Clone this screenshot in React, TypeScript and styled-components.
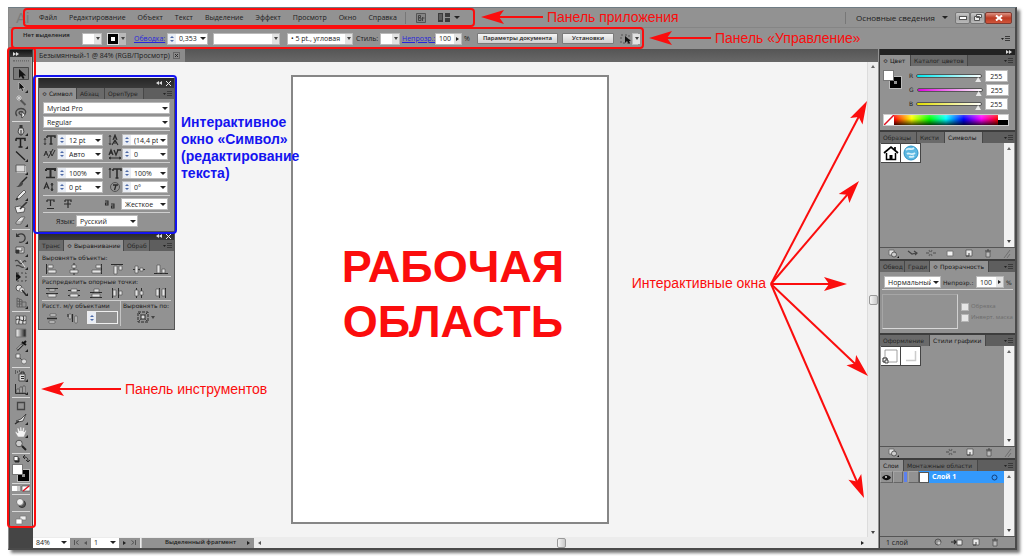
import React, { ReactNode } from 'react';
import styled, { createGlobalStyle, css } from 'styled-components';

const UI = '"Open Sans", "Noto Sans", sans-serif';
const WIDE = '"DejaVu Sans", "Noto Sans", sans-serif';
const RED = '#fb0d0d';
const BLUE = '#1414f0';

const Global = createGlobalStyle`
  *, *::before, *::after { box-sizing: border-box; }
  body { margin: 0; background: #fff; font-family: ${UI}; font-size: 7px; line-height: 9px; color: #1c1c1c; }
  button, input, select { font: inherit; color: inherit; margin: 0; padding: 0; border: 0; border-radius: 0; background: none; appearance: none; min-width: 0; }
  svg { display: block; flex: none; }
`;

/* ---------- frame ---------- */
const Page = styled.div`
  position: relative; min-height: 100vh; padding: 7px 7px 6px 8px; display: flex; overflow: hidden;
`;
const Win = styled.div`
  flex: 1; min-width: 0; display: flex; flex-direction: column; background: #929292;
  border-top: 1px solid #6f7c84; border-right: 2px solid #4a4a4a; border-bottom: 2px solid #4a4a4a; border-left: 1px solid #8a8a8a;
  box-shadow: 3px 3px 3px rgba(0,0,0,.55);
`;
const Spacer = styled.div`flex: 1;`;

const MenuBar = styled.header`
  height: 20px; display: flex; align-items: center; padding: 0 3px 0 7px; border-bottom: 1px solid #858585;
`;
const Logo = styled.span`
  width: 20px; font: 15px/18px "Liberation Sans", sans-serif; color: #7b7b7b;
`;
const Menu = styled.nav`display: flex; gap: 12px; padding: 0 8px 0 3px;`;
const MenuItem = styled.button<{ $large?: boolean }>`font-size: ${p => (p.$large ? 8 : 7)}px; line-height: 12px; white-space: nowrap;`;
const VLine = styled.span`width: 1px; height: 12px; background: #777; margin-right: 10px;`;
const WinButtons = styled.div`display: flex; margin-left: 7px;`;
const WinButton = styled.button<{ $close?: boolean }>`
  width: ${p => (p.$close ? 27 : 15)}px; height: 12px; display: grid; place-items: center; border: 1px solid ${p => (p.$close ? '#7e3a30' : '#777')};
  border-radius: 2px; background: ${p => (p.$close ? 'linear-gradient(#dd9384, #bb3a22 50%, #d1553a)' : 'linear-gradient(#c9c9c9, #a4a4a4 50%, #b9b9b9)')};
`;

const ControlBar = styled.div`
  height: 21px; display: flex; align-items: center; padding: 0 5px 0 14px; white-space: nowrap;
`;
const Status = styled.span`width: 59px; height: 16px; font-weight: 600; font-size: 6px; line-height: 8px;`;
const BlueLink = styled.a`color: #2626dc; text-decoration: underline; font-size: 7px;`;
const Label = styled.label<{ $w?: number; $m?: string }>`
  ${p => p.$w && css`width: ${p.$w}px; flex: none;`} margin: ${p => p.$m || 0}; white-space: nowrap;
`;
const Field = styled.span<{ $w: number; $m?: string }>`
  display: flex; flex: none; align-items: stretch; width: ${p => p.$w}px; height: 12px; margin: ${p => p.$m || 0}; background: #fff; border: 1px solid #b9b9b9; font: 7px/9px ${UI};
`;
const FieldInput = styled.input`flex: 1; padding: 0 0 0 3px; width: 0;`;
const FieldSelect = styled.select`flex: 1; padding: 0 0 0 3px; width: 0; outline: 0;`;
const DropZone = styled.span<{ $grey?: boolean }>`
  width: ${p => (p.$grey ? 7 : 9)}px; flex: none; display: grid; place-items: center; background: ${p => (p.$grey ? '#e2e2e2' : '#fff')};
`;
const Down = styled.span`width: 0; height: 0; border: 3px solid transparent; border-bottom: 0; border-top-color: #222;`;
const SmallDown = styled.span`width: 0; height: 0; border: 2px solid transparent; border-bottom: 0; border-top: 3px solid #444;`;
const SideArrow = styled.span`width: 0; height: 0; border: 2px solid transparent; border-right: 0; border-left: 3px solid #222;`;
const BackArrow = styled.span`width: 0; height: 0; border: 2px solid transparent; border-left: 0; border-right: 3px solid #555;`;
const Spin = styled.span`
  width: 8px; flex: none; display: flex; flex-direction: column; align-items: center; justify-content: center; gap: 2px; background: #e9edf4;
  &::before { content: ''; border: 2px solid transparent; border-top: 0; border-bottom-color: #4e6ba8; }
  &::after { content: ''; border: 2px solid transparent; border-bottom: 0; border-top-color: #4e6ba8; }
`;
const StrokeSwatch = styled.button`
  width: 12px; height: 12px; background: #fff; border: 4px solid #000; outline: 1px solid #ddd; outline-offset: -1px;
`;
const SwatchArrow = styled.button`width: 7px; height: 12px; display: grid; place-items: center; background: #b9b9b9;`;
const PushButton = styled.button<{ $w: number }>`
  width: ${p => p.$w}px; height: 11px; margin-right: 4px; font-size: 6px; font-weight: 600; line-height: 9px; border: 1px solid #7a7a7a; border-radius: 1px; background: linear-gradient(#f4f4f4, #d0d0d0);
`;

const Body = styled.div`flex: 1; display: flex; min-height: 0;`;

/* ---------- tools ---------- */
const ToolColumn = styled.aside`width: 24px; flex: none; background: #454545; padding: 1px 1px 0 1px;`;
const ToolHead = styled.div`
  height: 7px; padding-left: 3px; background: linear-gradient(#151515, #3c3c3c); display: flex; align-items: center;
`;
const ToolBody = styled.div`
  background: #929292; display: flex; flex-direction: column; align-items: center; padding: 3px 0 2px; border-right: 1px solid #a9a9a9;
`;
const Grip = styled.div`width: 16px; height: 2px; border-top: 1px dotted #6c6c6c; border-bottom: 1px dotted #7c7c7c; margin-bottom: 5px;`;
const ToolButton = styled.button<{ $on?: boolean }>`
  width: 16px; height: 13px; display: grid; place-items: center; border-radius: 1px;
  ${p => p.$on && css`background: #7b7b7b; box-shadow: inset 0 0 0 1px #484848;`}
`;
const ToolLine = styled.div`width: 18px; height: 1px; margin: 2px 0 1px; background: #d8d8d8;`;

/* ---------- document ---------- */
const Center = styled.main`flex: 1; min-width: 0; display: flex; flex-direction: column;`;
const DocTabs = styled.div`height: 13px; display: flex; background: linear-gradient(#555, #686868);`;
const DocTab = styled.div`
  display: flex; align-items: center; gap: 3px; padding: 0 5px 0 6px; background: #8b8b8b; line-height: 12px; white-space: nowrap;
`;
const CloseTab = styled.button`width: 7px; height: 7px; display: grid; place-items: center; border: 1px solid #666;`;
const Work = styled.div`flex: 1; display: flex; position: relative; background: #f4f4f4;`;
const Canvas = styled.div`flex: 1; display: flex; justify-content: center; padding: 13px 0;`;
const Artboard = styled.section`
  width: 318px; background: #fff; border: 2px solid #868686; display: flex; flex-direction: column; align-items: center; padding: 162px 0 0 6px;
`;
const Headline = styled.h1`
  margin: 0; font: bold 45px/55px "Liberation Sans", sans-serif; color: ${RED}; text-align: center; width: 240px;
`;
const VScroll = styled.div`
  width: 11px; flex: none; background: #ececec; border-left: 1px solid #dcdcdc; display: flex; flex-direction: column; align-items: center; justify-content: space-between; padding: 3px 0;
`;
const Thumb = styled.span`width: 9px; height: 10px; border: 1px solid #999; border-radius: 2px; background: linear-gradient(90deg, #f5f5f5, #c8c8c8);`;
const UpMark = styled.span`border: 2px solid transparent; border-top: 0; border-bottom: 3px solid #666;`;
const StatusBar = styled.footer`height: 11px; display: flex; align-items: center; background: #ececec;`;
const StatusNav = styled.div`
  height: 10px; width: 21px; background: #929292; display: flex; align-items: center; justify-content: space-evenly;
`;
const StatusField = styled.div<{ $w: number }>`
  width: ${p => p.$w}px; height: 10px; background: #fff; display: flex; align-items: center; padding: 0 3px; justify-content: space-between;
`;
const StatusText = styled.div`
  flex: none; width: 113px; height: 10px; margin-left: 1px; padding: 0 4px 0 23px; background: #929292; border-left: 1px solid #ccc; display: flex; align-items: center; justify-content: space-between;
  font-size: 6px; font-weight: 600;
`;
const HTrack = styled.div`flex: 1; display: flex; align-items: center; justify-content: space-between; padding: 0 14px 0 4px;`;

/* ---------- panels ---------- */
const Floating = styled.section<{ $y: number }>`
  position: absolute; left: 5px; top: ${p => p.$y}px; width: 137px; background: #929292; border: 1px solid #555; border-top: 0;
`;
const FloatHead = styled.div<{ $h: number }>`
  height: ${p => p.$h}px; background: linear-gradient(#262626, #3a3a3a); display: flex; align-items: center; justify-content: flex-end; gap: 4px; padding-right: 3px;
`;
const Tabs = styled.div`height: 11px; display: flex; align-items: stretch; background: #5e5e5e;`;
const Tab = styled.button<{ $w: number; $on?: boolean }>`
  width: ${p => p.$w}px; flex: none; overflow: hidden; white-space: nowrap; text-align: left; padding-left: 3px; font: 6px/10px ${WIDE};
  border-right: 1px solid #474747; background: ${p => (p.$on ? '#929292' : '#6a6a6a')}; color: ${p => (p.$on ? '#161616' : '#262626')};
`;
const PanelMenu = styled.button`margin-left: auto; padding-right: 2px; display: grid; place-items: center;`;
const CharBody = styled.div`padding: 3px 4px 4px; display: flex; flex-direction: column; gap: 2px;`;
const Row = styled.div<{ $gap?: number; $pad?: string }>`
  display: flex; align-items: center; gap: ${p => p.$gap || 0}px; padding: ${p => p.$pad || 0};
`;
const PairRow = styled.div<{ $top?: number }>`
  display: flex; justify-content: space-between; padding: ${p => p.$top || 0}px 2px 0 0;
`;
const Rule = styled.div<{ $m?: number }>`height: 1px; flex: none; margin: ${p => p.$m || 0}px 0 0; background: #cfcfcf;`;
const AlignBody = styled.div`padding: 2px 3px 3px; font: 6px/9px ${WIDE};`;
const AlignIcons = styled.div`display: flex; gap: 8px; padding: 0 3px; height: 13px; align-items: center;`;
const IconButton = styled.button`width: 14px; height: 12px; display: grid; place-items: center;`;
const Split = styled.div`display: flex; height: 25px;`;
const Column = styled.div<{ $line?: boolean }>`
  display: flex; flex-direction: column; gap: 1px; white-space: nowrap; ${p => p.$line && css`border-left: 1px solid #c4c4c4; padding-left: 2px; width: 51px;`}
`;
const GapBox = styled.span`display: flex; width: 31px; height: 13px; border: 1px solid #eee; background: #929292;`;

const Dock = styled.aside`
  width: 136px; flex: none; display: flex; flex-direction: column; gap: 2px; background: #3d3d3d; padding: 0 0 0 1px; margin-left: 1px;
`;
const DockHead = styled.div`height: 6px; display: flex; align-items: center; justify-content: flex-end; padding-right: 3px; background: #222;`;
const Panel = styled.section<{ $grow?: boolean }>`background: #929292; display: flex; flex-direction: column; ${p => p.$grow && css`flex: 1;`}`;
const ColorBody = styled.div`padding: 4px 6px 4px 3px;`;
const ColorTop = styled.div`display: flex; gap: 8px; height: 42px;`;
const FillStroke = styled.div<{ $s: number }>`
  width: ${p => p.$s}px; height: ${p => p.$s}px; display: grid;
  &::before { content: ''; grid-area: 1/1; place-self: end; width: 62%; height: 62%; background: #929292; border: 4px solid #000; outline: 1px solid #bbb; }
  &::after { content: ''; grid-area: 1/1; place-self: start; width: 62%; height: 62%; background: #fff; border: 1px solid #777; z-index: 1; }
`;
const Sliders = styled.div`flex: 1; display: flex; flex-direction: column; gap: 2px;`;
const SliderRow = styled.label`display: flex; align-items: center; height: 12px; gap: 3px; font: 6px/8px ${WIDE};`;
const Range = styled.input<{ $c: string }>`
  width: 66px; height: 12px;
  &::-webkit-slider-runnable-track { height: 4px; border: 1px solid #555; border-radius: 2px; background: linear-gradient(90deg, ${p => p.$c}, #fff); }
  &::-webkit-slider-thumb { appearance: none; width: 6px; height: 5px; margin-top: 2px; background: #e8e8e8; clip-path: polygon(50% 0, 100% 100%, 0 100%); }
`;
const NumBox = styled.input`width: 23px; height: 12px; background: #fff; border: 1px solid #bbb; padding-left: 4px; font: 7px/9px ${UI};`;
const Spectrum = styled.div`display: flex; height: 12px; margin-top: 2px; border: 1px solid #ccc;`;
const Hues = styled.div`flex: 1; background: linear-gradient(rgba(255,255,255,.25), transparent 40%, rgba(0,0,0,.75)), linear-gradient(90deg, red, #ff0 17%, #0f0 34%, #0ff 50%, #00f 67%, #f0f 84%, red);`;
const BlackWhite = styled.div`width: 10px; background: linear-gradient(#fff 50%, #000 50%);`;
const ListArea = styled.div<{ $h?: number }>`
  ${p => (p.$h ? css`height: ${p.$h}px;` : css`flex: 1;`)} display: flex; border-bottom: 1px solid #555;
`;
const Cells = styled.div`flex: 1; display: flex; align-items: flex-start; padding-left: 1px;`;
const Cell = styled.button`width: 20px; height: 20px; background: #fff; display: grid; place-items: center; border: 1px solid #444; border-left: 0;`;
const MiniScroll = styled.div`
  width: 10px; margin-right: 1px; background: #f2f2f2; display: flex; flex-direction: column; justify-content: space-between; align-items: center; padding: 4px 0;
`;
const Foot = styled.div`height: 11px; display: flex; align-items: center; gap: 5px; padding: 0 0 0 6px;`;
const TransBody = styled.div`padding: 4px 2px 4px 2px; font: 6px/9px ${WIDE};`;
const MaskRow = styled.div`display: flex; gap: 3px; padding-top: 4px; white-space: nowrap;`;
const Preview = styled.div`width: 76px; height: 35px; flex: none; border: 1px solid #a6a6a6; border-right-color: #d0d0d0; border-bottom-color: #d8d8d8;`;
const Checks = styled.div`display: flex; flex-direction: column; gap: 2px; padding-top: 8px; color: #6c6c6c; font-family: ${UI};`;
const CheckLabel = styled.label`display: flex; align-items: center; gap: 2px; height: 9px;`;
const Check = styled.input`width: 8px; height: 8px; background: #e6e6e6; border: 1px solid #b5b5b5; flex: none;`;
const LayerRow = styled.div`flex: 1; display: flex; height: 12px; align-items: stretch;`;
const LayerCell = styled.div<{ $w: number; $c?: string }>`
  width: ${p => p.$w}px; background: ${p => p.$c || '#929292'}; border: 1px solid #a5a5a5; border-right-color: #666; border-bottom-color: #666; display: grid; place-items: center;
`;
const LayerMark = styled.div`width: 3px; margin: 1px; background: #5b80ee;`;
const LayerName = styled.div`
  flex: 1; background: #3399fc; color: #fff; font: bold 7px/10px ${UI}; display: flex; align-items: center; gap: 3px; padding: 0 6px 0 0;
`;
const LayerThumb = styled.span`width: 10px; height: 11px; background: #fff; border: 1px solid #555;`;

/* ---------- annotations ---------- */
const Outline = styled.div<{ $x: number; $y: number; $w: number; $h: number; $c?: string }>`
  position: absolute; pointer-events: none; left: ${p => p.$x}px; top: ${p => p.$y}px; width: ${p => p.$w}px; height: ${p => p.$h}px; border: 2px solid ${p => p.$c || RED}; border-radius: 4px;
`;
const Callout = styled.div<{ $x: number; $y: number }>`
  position: absolute; left: ${p => p.$x}px; top: ${p => p.$y}px; display: flex; align-items: center; gap: 4px; font: 14px/16px "Liberation Sans", sans-serif; color: ${RED}; white-space: nowrap;
`;
const FanNote = styled(Callout)`left: auto; right: 154px; align-items: flex-start; pointer-events: none;`;
const FanText = styled.span`padding-top: 177px;`;
const BlueNote = styled.p`
  position: absolute; left: 181px; top: 114px; margin: 0; width: 130px; font: bold 14px/17px "Liberation Sans", sans-serif; color: ${BLUE};
`;

/* ---------- small drawings ---------- */
const Svg = ({ w = 14, h = 12, children }: { w?: number; h?: number; children: ReactNode }) => (
  <svg width={w} height={h} viewBox={`0 0 ${w} ${h}`} fill="none" stroke="#2b2b2b" aria-hidden="true">{children}</svg>
);
const Corner = () => <path d="M14 9v3h-3z" fill="#222" stroke="none" />;

const tools: Record<string, ReactNode> = {
  select: <path d="M5 1v9l2-2 2 3 1.500-1L9 7.500h3z" fill="#111" stroke="none" />,
  direct: <><path d="M5 1v8l2-1.500 1 3 1.500-.5-1-3h2.500z" fill="#111" stroke="#ddd" strokeWidth=".5" /><Corner /></>,
  wand: <><path d="M6.500 6l5 5" stroke="#555" strokeWidth="2" /><path d="M5 1v6M2 4h6M3 2l4 4M7 2L3 6" stroke="#d5d5d5" strokeWidth=".8" /></>,
  lasso: <><path d="M3 9C0 5 3 1.500 7 1.500s6 3 4 5.500-5 1-6-1c0-2 4-2 4 0l-1 5" stroke="#444" strokeWidth="1.300" /><path d="M8 5v6l3-3z" fill="#eee" strokeWidth=".5" /></>,
  pen: <><path d="M5 4l-1 4 2 3h2l2-3-1-4z" fill="#d4d4d4" stroke="#444" /><path d="M5.500 1h3v3h-3z" fill="#333" stroke="none" /><path d="M7 6v5" /><Corner /></>,
  type: <><path d="M2 1.500h9v2.500M2 4V1.500M6.500 1.500V10M4.500 10h4" stroke="#1f1f1f" strokeWidth="1.500" /><Corner /></>,
  line: <><path d="M2 1.500l9 8.500" stroke="#1f1f1f" strokeWidth="1.300" /><Corner /></>,
  rect: <><path d="M2 2h9v7H2z" fill="#dcdcdc" stroke="#5c5c5c" /><path d="M2.500 9.500h9V3" stroke="#fff" strokeWidth=".5" /><Corner /></>,
  brush: <><path d="M13 1L7 7" stroke="#222" strokeWidth="1.500" /><path d="M8 6c-3 0-2 4-6 5 3 .5 7-1 7-4z" fill="#444" stroke="none" /></>,
  pencil: <><path d="M10 1l2 2-6 6-4 2 2-4z" fill="#e8e8e8" stroke="#444" strokeWidth=".8" /><path d="M2 11l2-1-1-1z" fill="#111" /><Corner /></>,
  blob: <><path d="M1 5l5-1 5 2-1 4-7 1z" fill="#eee" stroke="#444" strokeWidth=".8" /><path d="M13 0L6 7" strokeWidth="1.600" stroke="#333" /></>,
  eraser: <><path d="M2 7l5-5h4L7 9H2z" fill="#e6e6e6" stroke="#555" strokeWidth=".8" /><path d="M2 7h5l4-5M7 7v2" stroke="#777" strokeWidth=".8" /><Corner /></>,
  rotate: <><path d="M3 4C5 1 10 1 11 5s-3 6-6 5" stroke="#3a3a3a" strokeWidth="1.200" /><path d="M2 1v4h4z" fill="#333" stroke="none" /><Corner /></>,
  scale: <><path d="M2 2h8v6H2z" fill="#ddd" stroke="#444" strokeWidth=".8" /><path d="M2 5h3v3H2z" fill="#333" stroke="#333" strokeWidth=".8" /><path d="M8 3v3H5" stroke="#555" /><Corner /></>,
  warp: <><path d="M1 3c4-3 4 5 7 2s3-3 4-1M2 8c3-3 5 3 8 1" stroke="#444" strokeWidth="1.200" /><path d="M6 2l5 7" stroke="#ddd" /><Corner /></>,
  free: <><path d="M2 1v9l5-4z" fill="#111" stroke="none" /><path d="M3 2h9v8H3z" stroke="#444" strokeDasharray="2 2" /></>,
  shape: <><circle cx="5" cy="4" r="3" fill="#e5e5e5" stroke="#555" /><circle cx="8" cy="6" r="2.500" fill="#ddd" stroke="#777" /><path d="M8 6l4 5" strokeWidth="1.500" /><Corner /></>,
  perspective: <><path d="M3 1l5 2v7H3zM3 4l5 1M3 7h5M5.500 2v8M8 5h4v5H8" stroke="#555" strokeWidth=".8" /><Corner /></>,
  mesh: <><path d="M2 2h10v8H2z" fill="#ddd" stroke="#555" strokeWidth=".8" /><path d="M2 6c3-3 6 3 10 0M5 2c2 3-1 5 0 8M9 2c2 3-1 5 0 8" stroke="#333" /></>,
  gradient: <><defs><linearGradient id="tg"><stop stopColor="#fff" /><stop offset="1" stopColor="#111" /></linearGradient></defs><path d="M2 2h10v8H2z" fill="url(#tg)" stroke="#777" /></>,
  dropper: <><path d="M9 4l-6 6" stroke="#333" strokeWidth="2.500" /><path d="M8 4.500l-5 5" stroke="#fff" /><path d="M8 2l4 3M10 3l2-2" stroke="#111" strokeWidth="2" /><Corner /></>,
  blend: <><path d="M2 1h4v4H2z" fill="#eee" stroke="#555" strokeWidth=".8" /><path d="M6 5l2 2" strokeDasharray="1 1" /><circle cx="10" cy="8.500" r="2.500" fill="#ddd" stroke="#666" strokeWidth=".8" /></>,
  spray: <><path d="M5 4h6v7H5z" fill="#d8d8d8" stroke="#444" /><path d="M7 4V2h3v2M7 6.500h3M7 8.500h3" /><path d="M1 1h1M3 2h1M1 3h1M5 1h1" stroke="#222" /><Corner /></>,
  graph: <><path d="M1.500 1v9.500H12" /><path d="M3 6h2v4H3zM6 4h2v6H6zM9 3h2v7H9z" fill="#ccc" stroke="#444" strokeWidth=".7" /><Corner /></>,
  artboard: <path d="M3.500 2.500h7v7h-7z" stroke="#444" strokeWidth="1.300" />,
  slice: <><path d="M12 1L7 6 2 8l2 1 5-1z" fill="#e0e0e0" stroke="#333" strokeWidth=".8" /><path d="M1 11l4-3" strokeWidth="1.300" /><Corner /></>,
  hand: <><path d="M4 11L1 6l1-.5L4 7 3 2h1.500L6 5V1h1.500L8 5l1-3.500h1.500L10 6l1.500-2 1 .5L10 11z" fill="#f4f4f4" stroke="#888" strokeWidth=".5" /><Corner /></>,
  zoom: <><circle cx="5" cy="4.500" r="3.300" fill="#ccc" stroke="#555" /><path d="M8 7l4 4" stroke="#222" strokeWidth="2" /></>,
};
const toolGroups = [
  ['select', 'direct', 'wand', 'lasso'],
  ['pen', 'type', 'line', 'rect', 'brush', 'pencil', 'blob', 'eraser'],
  ['rotate', 'scale', 'warp', 'free', 'shape', 'perspective'],
  ['mesh', 'gradient', 'dropper', 'blend'],
  ['spray', 'graph'],
  ['artboard', 'slice', 'hand', 'zoom'],
];

const Collapse = ({ left }: { left?: boolean }) => (
  <svg width="6" height="4" viewBox="0 0 6 4" fill="#ddd" aria-hidden="true">
    <path d={left ? 'M3 0v4L0 2zM6 0v4L3 2z' : 'M0 0v4l3-2zM3 0v4l3-2z'} />
  </svg>
);
const CloseMark = () => <Svg w={5} h={5}><path d="M0 0l5 5M5 0L0 5" stroke="#eee" /></Svg>;
const MenuLines = () => (
  <Svg w={9} h={6}><path d="M0 2h3L1.500 4z" fill="#222" stroke="none" /><path d="M4 .5h5M4 2.500h5M4 4.500h5" stroke="#3a3a3a" /></Svg>
);

type TabSpec = [string, number];
const TabStrip = ({ tabs, on }: { tabs: TabSpec[]; on: number }) => (
  <Tabs role="tablist">
    {tabs.map(([t, w], i) => <Tab key={t} role="tab" aria-selected={i === on} $w={w} $on={i === on}>{t}</Tab>)}
    <PanelMenu aria-label="Меню панели"><MenuLines /></PanelMenu>
  </Tabs>
);

const Combo = ({ v, w, spin, label, m, grey }: { v: string; w: number; spin?: boolean; label: string; m?: string; grey?: boolean }) => (
  <Field $w={w} $m={m}>
    {spin && <Spin />}
    {spin ? <FieldInput aria-label={label} defaultValue={v} /> : <FieldSelect aria-label={label}><option>{v}</option></FieldSelect>}
    <DropZone $grey={grey}>{grey ? <SmallDown /> : <Down />}</DropZone>
  </Field>
);

const glyphs: Record<string, ReactNode> = {
  size: <><path d="M4 2h8v2M4 4V2M8 2v8M6.500 10h3" strokeWidth="1.500" /><path d="M2 5v5M1 6l1-2 1 2M1 9l1 2 1-2" strokeWidth=".7" /></>,
  leading: <><path d="M5 6l2-5 2 5M6 4h2M4 11l3-5 3 5M5 9h4" strokeWidth="1.100" /><path d="M2 2v8M1 3l1-2 1 2M1 9l1 2 1-2" strokeWidth=".7" /></>,
  kern: <path d="M1 8l2-5 2 5M2 6h2M7 3l2 5 3-6M5 10l5-9" />,
  track: <><path d="M1 7l2-5 2 5M2 5h2M6 2l2 5 2-5M9 2h4" strokeWidth="1.300" /><path d="M1 10h12M3 9l-2 1 2 1M11 9l2 1-2 1" /></>,
  vscale: <><path d="M3 2h9v2M3 4V2M7.500 2v8" strokeWidth="2" /><path d="M3 10.500h9" strokeWidth="1.500" /></>,
  hscale: <><path d="M5 2h8v2M5 4V2M9 2v9M7.500 11h3" strokeWidth="1.600" /><path d="M2 2v9M1 3l1-2 1 2" /></>,
  base: <><path d="M1 8l2.500-6L6 8M2 6h3" strokeWidth="1.200" /><path d="M8 4l1-2 1 2zM8 8l1 2 1-2zM9 4v5" /></>,
  turn: <><circle cx="7" cy="6" r="4.500" stroke="#555" /><path d="M5 4h5M8 4L6.500 9" strokeWidth="1.300" /></>,
  under: <path d="M4 2h7v2M4 4V2M7.500 2v6M4 10.500h7" strokeWidth="1.200" />,
  strike: <path d="M5 2h6v2M5 4V2M8 2v8M4 6h7" strokeWidth="1.200" />,
  aa: <path d="M1 3h3v4H1.500V5H4M7 6h3v4H7.500V8H10" strokeWidth="1.100" />,
};
const Glyph = ({ n }: { n: string }) => <Svg>{glyphs[n]}</Svg>;

const Measure = ({ n, v, label }: { n: string; v: string; label: string }) => (
  <Row><Glyph n={n} /><Combo spin v={v} w={46} label={label} /></Row>
);

const CharacterPanel = () => (
  <Floating $y={16}>
    <FloatHead $h={10}><Collapse left /><CloseMark /></FloatHead>
    <TabStrip tabs={[['≎ Символ', 38], ['Абзац', 28], ['OpenType', 39]]} on={0} />
    <CharBody>
      <Combo v="Myriad Pro" w={127} label="Шрифт" />
      <Combo v="Regular" w={127} label="Начертание" />
      <Rule />
      <PairRow $top={1}><Measure n="size" v="12 pt" label="Кегль" /><Measure n="leading" v="(14,4 pt" label="Интерлиньяж" /></PairRow>
      <PairRow><Measure n="kern" v="Авто" label="Кернинг" /><Measure n="track" v="0" label="Трекинг" /></PairRow>
      <Rule />
      <PairRow $top={2}><Measure n="vscale" v="100%" label="Масштаб по горизонтали" /><Measure n="hscale" v="100%" label="Масштаб по вертикали" /></PairRow>
      <PairRow><Measure n="base" v="0 pt" label="Сдвиг базовой линии" /><Measure n="turn" v="0°" label="Поворот символа" /></PairRow>
      <Rule />
      <Row $gap={3} $pad="0 2px 0 0"><Glyph n="under" /><Glyph n="strike" /><Spacer /><Glyph n="aa" /><Combo v="Жесткое" w={47} label="Сглаживание" /></Row>
      <Rule />
      <Row $pad="0 0 0 13px"><Label $w={20}>Язык:</Label><Combo v="Русский" w={62} label="Язык" /></Row>
    </CharBody>
  </Floating>
);

const L = '#e4e4e4';
const Bars = ({ d }: { d: string }) => <path d={d} fill={L} stroke="#555" strokeWidth=".7" />;
const alignIcons: Record<string, ReactNode> = {
  l: <><path d="M1.500 1v10" /><Bars d="M3 2h5v3H3zM3 7h8v3H3z" /></>,
  c: <><path d="M7 0v12" /><Bars d="M5 2h4v3H5zM3 7h8v3H3z" /></>,
  r: <><path d="M12.500 1v10" /><Bars d="M7 2h5v3H7zM3 7h9v3H3z" /></>,
  t: <><path d="M1 1.500h12" /><Bars d="M4 3h3v8H4zM9 3h3v4H9z" /></>,
  m: <><path d="M1 6.500h12" /><Bars d="M3 3h3v7H3zM8 5h3v3H8z" /></>,
  b: <><path d="M0 10.500h14" /><Bars d="M3 2h3v8H3zM8 6h3v4H8z" /></>,
  v1: <><path d="M1 1.500h12M1 6.500h12" /><Bars d="M4 2h6v2H4zM3 7h8v3H3z" /></>,
  v2: <><path d="M1 3.500h12M1 8.500h12" /><Bars d="M4 2h6v3H4zM3 7h8v3H3z" /></>,
  v3: <><path d="M1 5.500h12M1 10.500h12" /><Bars d="M5 2h5v3H5zM3 7h8v3H3z" /></>,
  h1: <><path d="M2.500 1v10M8.500 1v10" /><Bars d="M3 3h3v6H3zM9 4h3v4H9z" /></>,
  h2: <><path d="M4.500 1v10M9.500 1v10" /><Bars d="M3 3h3v6H3zM8 4h3v4H8z" /></>,
  h3: <><path d="M5.500 1v10M11.500 1v10" /><Bars d="M2 2h3v7H2zM8 2h3v7H8z" /></>,
  dv: <><path d="M2 6.500h10" strokeWidth="1.500" /><Bars d="M5 2h6v2H5zM4 9h6v2H4z" /></>,
  dh: <><path d="M2 2v3M6.500 2v8" strokeWidth="1.200" /><Bars d="M3 2h2v5H3zM9 4h2v7H9z" /></>,
};
const AlignButton = ({ n }: { n: string }) => <IconButton aria-label={n}><Svg>{alignIcons[n]}</Svg></IconButton>;
const AlignButtons = ({ names }: { names: string[] }) => (
  <AlignIcons>{names.map(n => <AlignButton key={n} n={n} />)}</AlignIcons>
);

const AlignPanel = () => (
  <Floating $y={170}>
    <FloatHead $h={8}><Collapse left /><CloseMark /></FloatHead>
    <TabStrip tabs={[['Транс', 25], ['≎ Выравнивание', 60], ['Обраб', 26]]} on={1} />
    <AlignBody>
      Выровнять объекты:
      <AlignButtons names={['l', 'c', 'r', 't', 'm', 'b']} />
      <Rule $m={1} />
      Распределить опорные точки:
      <AlignButtons names={['v1', 'v2', 'v3', 'h1', 'h2', 'h3']} />
      <Rule $m={1} />
      <Split>
        <Column>
          Расст. м/у объектами
          <Row $pad="0 0 0 3px" $gap={7}>
            <AlignButton n="dv" />
            <AlignButton n="dh" />
            <GapBox><Spin /><FieldInput aria-label="Интервал" /></GapBox>
          </Row>
        </Column>
        <Spacer />
        <Column $line>
          Выровнять по:
          <Row $pad="0 0 0 14px" $gap={2}>
            <Svg w={12} h={12}><path d="M1 1h10v10H1z" strokeDasharray="3 1" /><path d="M2 2l8 8M10 2l-8 8" strokeDasharray="2 1" /><path d="M4 4h4v4H4z" fill="#ddd" /></Svg>
            <SmallDown />
          </Row>
        </Column>
      </Split>
    </AlignBody>
  </Floating>
);

const footIcons: Record<string, ReactNode> = {
  lib: <><path d="M2 2h5v5H2z" fill="#e4e4e4" stroke="#666" strokeWidth=".8" /><circle cx="7" cy="6.500" r="2.500" fill="#ccc" stroke="#444" strokeWidth=".8" /><path d="M12 8v2h-2z" fill="#111" stroke="none" /></>,
  place: <path d="M2 3l4 3 4-1M8 3l3 2-2 2" strokeWidth="1.200" stroke="#444" />,
  break: <path d="M1 5h3M8 5h3M4 2l1 2M7 2l-1 2M4 8l1-2M7 8l-1-2" stroke="#666" strokeWidth="1.300" />,
  opts: <path d="M3 3h6v5H3z" fill="#f2f2f2" stroke="#777" />,
  add: <><path d="M3 2h6v6H3z" fill="#e8e8e8" stroke="#555" strokeWidth=".8" /><path d="M6 5v3H3" stroke="#444" /></>,
  trash: <><path d="M3 3h6M5 2h2" stroke="#444" /><path d="M4 4h4v5H4z" fill="#bbb" stroke="#555" strokeWidth=".8" /></>,
  grip: <path d="M3 10l6-8M6 10l3-4" stroke="#666" strokeWidth=".8" />,
  mask: <><circle cx="6" cy="5" r="3" stroke="#555" /><circle cx="7" cy="6" r="1.500" fill="#ccc" stroke="none" /></>,
  sub: <><path d="M0 5h5M3 3l2 2-2 2" strokeWidth="1.200" /><path d="M6 3h5v5H6z" fill="#e8e8e8" stroke="#444" strokeWidth=".8" /></>,
};
const FootIcon = ({ n }: { n: string }) => <IconButton aria-label={n}><Svg w={12} h={11}>{footIcons[n]}</Svg></IconButton>;
const Mini = () => <MiniScroll><UpMark /><SmallDown /></MiniScroll>;

const RightDock = () => (
  <Dock>
    <div>
      <DockHead><Collapse /></DockHead>
      <Panel>
        <TabStrip tabs={[['≎ Цвет', 31], ['Каталог цветов', 57]]} on={0} />
        <ColorBody>
          <ColorTop>
            <FillStroke $s={18} />
            <Sliders>
              {[['R', '#00e8f0'], ['G', '#e000e0'], ['B', '#e0dc00']].map(([n, c]) => (
                <SliderRow key={n}>{n}<Range type="range" max={255} defaultValue={255} $c={c} aria-label={n} /><NumBox defaultValue="255" aria-label={`${n} значение`} /></SliderRow>
              ))}
            </Sliders>
          </ColorTop>
          <Spectrum>
            <Svg w={10} h={10}><path d="M0 0h10v10H0z" fill="#fff" stroke="none" /><path d="M0 10L10 0" stroke="#e01020" strokeWidth="1.500" /></Svg>
            <Hues /><BlackWhite />
          </Spectrum>
        </ColorBody>
      </Panel>
    </div>
    <Panel>
      <TabStrip tabs={[['Образцы', 37], ['Кисти', 28], ['Символы', 38]]} on={2} />
      <ListArea $h={105}>
        <Cells>
          <Cell aria-label="Дом"><Svg w={18} h={18}><path d="M2 9l7-6 7 6M13 3v3" stroke="#000" strokeWidth="1.700" /><path d="M4.500 9v6.500h9V9" stroke="#000" strokeWidth="1.500" /><path d="M7.500 11h3v5h-3z" fill="#000" stroke="none" /></Svg></Cell>
          <Cell aria-label="Сфера"><Svg w={18} h={18}><circle cx="9" cy="9" r="7" fill="#5cb8e2" stroke="#2f94c6" /><path d="M4 6c3-3 5 1 8-2M5 10c2-2 4 2 8-1M7 13c2-1 3 1 5-1" stroke="#d5f0fa" strokeWidth="1.800" /></Svg></Cell>
        </Cells>
        <Mini />
      </ListArea>
      <Foot>{['lib', 'place', 'break', 'opts', 'add', 'trash', 'grip'].map(n => <FootIcon key={n} n={n} />)}</Foot>
    </Panel>
    <Panel>
      <TabStrip tabs={[['Обвод', 25], ['Гради', 25], ['≎ Прозрачность', 59]]} on={2} />
      <TransBody>
        <Row>
          <Combo v="Нормальный" w={57} label="Режим" m="0 2px" />
          <Label htmlFor="opacity" $w={33}>Непрозр.:</Label>
          <Field $w={28}><FieldInput id="opacity" defaultValue="100" /><DropZone $grey><SideArrow /></DropZone></Field>&nbsp;%
        </Row>
        <Rule $m={1} />
        <MaskRow>
          <Preview />
          <Checks>
            <CheckLabel><Check type="checkbox" disabled />Обрезка</CheckLabel>
            <CheckLabel><Check type="checkbox" disabled />Инверт. маска</CheckLabel>
          </Checks>
        </MaskRow>
      </TransBody>
    </Panel>
    <Panel>
      <TabStrip tabs={[['Оформление', 50], ['Стили графики', 56]]} on={1} />
      <ListArea $h={101}>
        <Cells>
          <Cell aria-label="Стиль по умолчанию"><Svg w={18} h={18}><path d="M3 3h12v12H3z" stroke="#888" strokeWidth=".8" /><path d="M1 11h4v4H1z" fill="#fff" stroke="#222" /><path d="M3 13h3v3H3z" fill="#eee" stroke="#222" strokeWidth=".8" /></Svg></Cell>
          <Cell aria-label="Тень"><Svg w={18} h={18}><path d="M4 13.500h9.500V4" stroke="#ccc" strokeWidth="1.500" /></Svg></Cell>
        </Cells>
        <Mini />
      </ListArea>
      <Foot><FootIcon n="lib" /><Spacer />{['break', 'add', 'trash', 'grip'].map(n => <FootIcon key={n} n={n} />)}</Foot>
    </Panel>
    <Panel $grow>
      <TabStrip tabs={[['Слои', 24], ['Монтажные области', 74]]} on={0} />
      <ListArea>
        <LayerRow>
          <LayerCell $w={13}><Svg w={9} h={7}><path d="M0 3.500C2 0 7 0 9 3.500 7 7 2 7 0 3.500z" fill="#111" stroke="none" /><circle cx="4" cy="3" r="1" fill="#ddd" stroke="none" /></Svg></LayerCell>
          <LayerCell $w={10} />
          <LayerMark />
          <LayerCell $w={11} />
          <LayerName><LayerThumb />Слой 1<Spacer /><Svg w={7} h={7}><circle cx="3.500" cy="3.500" r="2.500" stroke="#16407a" /></Svg></LayerName>
        </LayerRow>
        <Mini />
      </ListArea>
      <Foot>1 слой<Spacer />{['mask', 'sub', 'add', 'trash'].map(n => <FootIcon key={n} n={n} />)}<FootEnd /></Foot>
    </Panel>
  </Dock>
);
const FootEnd = styled.span`width: 8px;`;

const head = (x: number, y: number, deg: number) => (
  <path d="M0 0L-23 -7L-18 0L-23 7Z" fill={RED} transform={`translate(${x} ${y}) rotate(${deg})`} />
);
const LeftArrow = ({ w }: { w: number }) => (
  <svg width={w} height="16" viewBox={`0 0 ${w} 16`} aria-hidden="true">
    <path d={`M16 8H${w}`} stroke={RED} strokeWidth="2" />{head(0, 8, 180)}
  </svg>
);
const fanTips = [[97, 3], [89, 83], [77, 186], [98, 278], [94, 400]];
const FanArrows = () => (
  <svg width="100" height="404" viewBox="0 0 100 404" aria-hidden="true">
    {fanTips.map(([x, y]) => {
      const a = Math.atan2(y - 186, x - 1);
      return (
        <g key={y}>
          <path d={`M1 186L${x - 15 * Math.cos(a)} ${y - 15 * Math.sin(a)}`} stroke={RED} strokeWidth="2" />
          {head(x, y, (a * 180) / Math.PI)}
        </g>
      );
    })}
  </svg>
);

const menu = ['Файл', 'Редактирование', 'Объект', 'Текст', 'Выделение', 'Эффект', 'Просмотр', 'Окно', 'Справка'];

export default function App() {
  return (
    <Page>
      <Global />
      <Win>
        <MenuBar>
          <Logo>Ai</Logo>
          <Menu>{menu.map(m => <MenuItem key={m}>{m}</MenuItem>)}</Menu>
          <VLine />
          <Row $gap={12}>
            <Svg w={10} h={10}><path d="M.5.5h9v9h-9z" stroke="#555" fill="#858585" /><path d="M2.500 2.500v5M2.500 2.500h2v2h-2M2.500 5h2.500v2.500H2.500M6.500 4v4M6.500 5h2" stroke="#444" /></Svg>
            <Row $gap={4}><Svg w={12} h={9}><path d="M0 0h5v9H0zM7 0h5v4H7zM7 5h5v4H7z" fill="#3c3c3c" stroke="none" /><path d="M1 2h3M1 4h3M1 6h3" stroke="#aaa" strokeWidth=".6" /></Svg><Down /></Row>
          </Row>
          <Spacer />
          <VLine />
          <Row $gap={7}><MenuItem $large>Основные сведения</MenuItem><Down /></Row>
          <WinButtons>
            <WinButton aria-label="Свернуть"><Svg w={8} h={5}><rect x=".5" y="1.500" width="7" height="3" fill="#fff" stroke="#555" /></Svg></WinButton>
            <WinButton aria-label="Восстановить"><Svg w={8} h={7}><path d="M2.500.5h5v3h-5zM.5 2.500h5v4h-5z" fill="#eee" stroke="#555" /></Svg></WinButton>
            <WinButton $close aria-label="Закрыть"><Svg w={8} h={6}><path d="M1 .5l6 5M7 .5l-6 5" stroke="#fff" strokeWidth="2" /></Svg></WinButton>
          </WinButtons>
        </MenuBar>
        <ControlBar>
          <Status>Нет выделения</Status>
          <Combo v="" w={20} grey label="Заливка" m="0 5px 0 0" />
          <StrokeSwatch aria-label="Цвет обводки" /><SwatchArrow aria-label="Выбрать обводку"><SmallDown /></SwatchArrow>
          <Label $w={33} $m="0 0 0 8px"><BlueLink href="#stroke">Обводка:</BlueLink></Label>
          <Combo spin v="0,353" w={41} label="Толщина" m="0 5px 0 0" />
          <Combo v="" w={67} grey label="Профиль" m="0 7px 0 0" />
          <Combo v="•  5 pt., угловая" w={66} grey label="Кисть" m="0 3px 0 0" />
          <Label $w={24}>Стиль:</Label>
          <Combo v="" w={20} grey label="Стиль" m="0 2px 0 0" />
          <Label $w={33}><BlueLink href="#opacity">Непрозр.:</BlueLink></Label>
          <Field $w={27}><FieldInput aria-label="Непрозрачность" defaultValue="100" /><DropZone $grey><SideArrow /></DropZone></Field>
          <Label $w={13} $m="0 0 0 2px">%</Label>
          <PushButton $w={81}>Параметры документа</PushButton>
          <PushButton $w={52}>Установки</PushButton>
          <Svg w={14} h={12}><path d="M3 2h8v8H3z" stroke="#555" strokeDasharray="2 2" /><path d="M7 3v7l2-2 2 3 1-1-1-2h2z" fill="#111" stroke="none" /></Svg>
          <Field $w={6}><DropZone $grey><SmallDown /></DropZone></Field>
          <Spacer />
          <MenuLines />
        </ControlBar>
        <Body>
          <ToolColumn>
            <ToolHead><Collapse /></ToolHead>
            <ToolBody>
              <Grip />
              {toolGroups.map((g, gi) => (
                <React.Fragment key={gi}>
                  {g.map(t => <ToolButton key={t} $on={t === 'select'} aria-label={t}><Svg>{tools[t]}</Svg></ToolButton>)}
                  <ToolLine />
                </React.Fragment>
              ))}
              <Svg w={18} h={9}><path d="M3 3h4v4H3z" fill="#222" /><path d="M2 1.500h4v4H2z" fill="#fff" stroke="#555" /><path d="M12 2c3 0 4 1 4 5M13 0l-2 2 2 2M14 5l2 2 2-2" /></Svg>
              <FillStroke $s={17} />
              <ToolLine />
              <Svg w={18} h={7}><path d="M0 1h5v5H0z" fill="#fff" stroke="none" /><path d="M5 1h3v5H5z" fill="#ccc" stroke="none" /><path d="M10 1h8v5h-8z" fill="#fff" stroke="#444" strokeWidth=".6" /><path d="M11 6l6-5" stroke="#e01020" strokeWidth="1.500" /></Svg>
              <ToolLine />
              <ToolButton aria-label="draw"><Svg><circle cx="8" cy="7" r="3.500" fill="#555" stroke="#333" /><circle cx="6" cy="5" r="3.500" fill="#eee" stroke="#777" /></Svg></ToolButton>
              <ToolLine />
              <ToolButton aria-label="screen"><Svg><path d="M6 2h6v4H6z" fill="#f0f0f0" stroke="#777" strokeWidth=".7" /><path d="M2 5h6v5H2z" fill="#fff" stroke="#777" strokeWidth=".7" /></Svg></ToolButton>
            </ToolBody>
          </ToolColumn>
          <Center>
            <DocTabs>
              <DocTab>Безымянный-1 @ 84% (RGB/Просмотр)<CloseTab aria-label="Закрыть вкладку"><Svg w={5} h={5}><path d="M1 1l3 3M4 1L1 4" /></Svg></CloseTab></DocTab>
            </DocTabs>
            <Work>
              <Canvas><Artboard><Headline>РАБОЧАЯ ОБЛАСТЬ</Headline></Artboard></Canvas>
              <VScroll><UpMark /><Thumb /><SmallDown /></VScroll>
              <CharacterPanel />
              <AlignPanel />
            </Work>
            <StatusBar>
              <StatusField $w={37}>84%<Down /></StatusField>
              <StatusNav><Svg w={5} h={5}><path d="M.5 0v5M4.500.5l-2.500 2 2.500 2" stroke="#555" /></Svg><BackArrow /></StatusNav>
              <StatusField $w={28}>1<Down /></StatusField>
              <StatusNav><SideArrow /><Svg w={5} h={5}><path d="M4.500 0v5M.5.5l2.500 2-2.500 2" stroke="#555" /></Svg></StatusNav>
              <StatusText>Выделенный фрагмент<SideArrow /></StatusText>
              <HTrack><BackArrow /><Thumb /><SideArrow /></HTrack>
            </StatusBar>
          </Center>
          <RightDock />
        </Body>
      </Win>

      <Outline $x={23} $y={8} $w={452} $h={19} />
      <Outline $x={11} $y={27} $w={633} $h={22} />
      <Outline $x={7} $y={47} $w={29} $h={481} />
      <Outline $x={33} $y={75} $w={144} $h={159} $c={BLUE} />
      <Callout $x={481} $y={9}><LeftArrow w={62} />Панель приложения</Callout>
      <Callout $x={649} $y={30}><LeftArrow w={62} />Панель «Управление»</Callout>
      <Callout $x={41} $y={381}><LeftArrow w={80} />Панель инструментов</Callout>
      <FanNote $x={0} $y={98}><FanText>Интерактивные окна</FanText><FanArrows /></FanNote>
      <BlueNote>Интерактивное окно «Символ» (редактирование текста)</BlueNote>
    </Page>
  );
}
